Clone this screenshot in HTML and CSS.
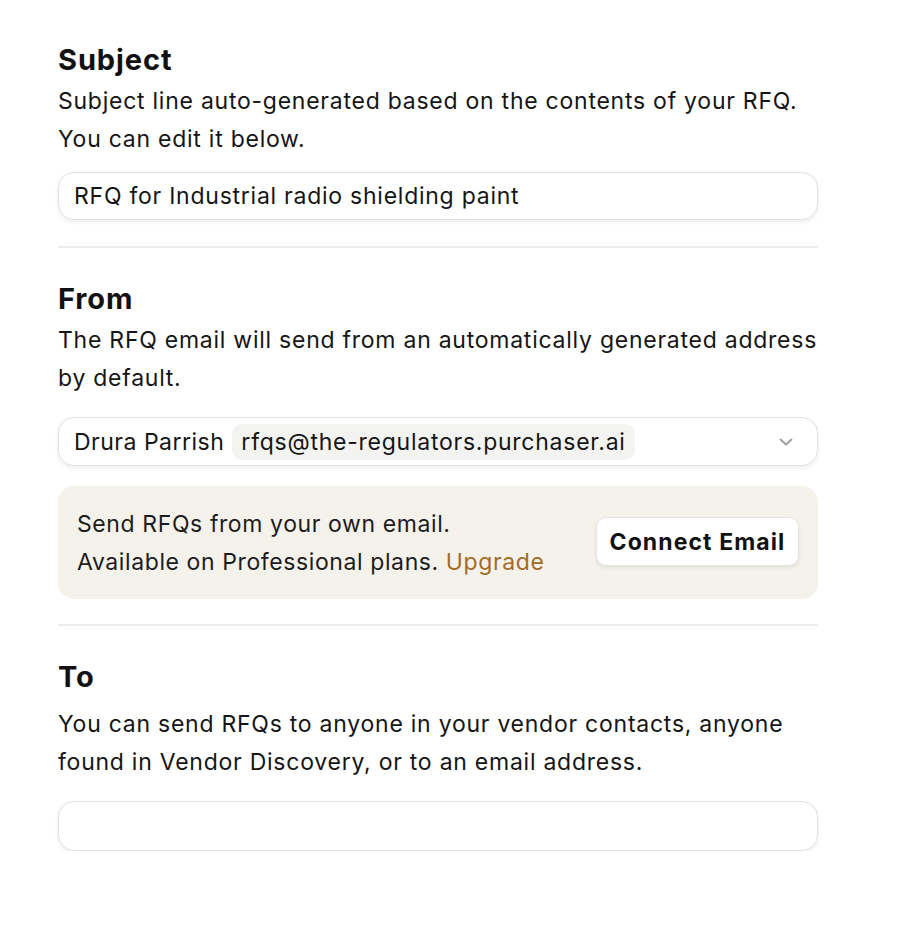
FILE: index.html
```html
<!DOCTYPE html>
<html>
<head>
<meta charset="utf-8">
<link rel="stylesheet" href="styles.css">
</head>
<body>
<main class="form">
  <section class="section">
    <h2 class="title">Subject</h2>
    <p class="desc">Subject line auto-generated based on the contents of your RFQ. You can edit it below.</p>
    <div class="field field-subject">RFQ for Industrial radio shielding paint</div>
  </section>
  <hr class="divider">
  <section class="section">
    <h2 class="title">From</h2>
    <p class="desc">The RFQ email will send from an automatically generated address by default.</p>
    <div class="field select">
      <span class="name">Drura Parrish</span>
      <span class="chip">rfqs@the-regulators.purchaser.ai</span>
      <svg class="chev" width="18" height="18" viewBox="0 0 18 18"><path d="M3.5 6.5 L9 11.5 L14.5 6.5" fill="none" stroke="#9c9c9c" stroke-width="1.8" stroke-linecap="round" stroke-linejoin="round"/></svg>
    </div>
    <div class="banner">
      <div class="banner-text">
        <div>Send RFQs from your own email.</div>
        <div>Available on Professional plans. <span class="upgrade">Upgrade</span></div>
      </div>
      <button class="btn">Connect Email</button>
    </div>
  </section>
  <hr class="divider divider-after-banner">
  <section class="section">
    <h2 class="title">To</h2>
    <p class="desc desc-to">You can send RFQs to anyone in your vendor contacts, anyone found in Vendor Discovery, or to an email address.</p>
    <div class="field empty"></div>
  </section>
</main>
</body>
</html>
```
FILE: styles.css
```css
* { box-sizing: border-box; }
body {
  margin: 0;
  background: #fff;
  font-family: Inter, "Noto Sans", sans-serif;
  color: #111;
}
.form {
  width: 760px;
  margin-left: 58px;
  padding-top: 40px;
}
.title {
  margin: 0;
  font-size: 29px;
  font-weight: 700;
  line-height: 40px;
  letter-spacing: 0.9px;
}
.desc {
  margin: 2px 0 0;
  font-size: 23px;
  line-height: 38px;
  letter-spacing: 0.75px;
  color: #151515;
}
.desc-to { margin-top: 8px; }
.field {
  margin-top: 20px;
  height: 49px;
  border: 1px solid #e0e0e0;
  border-radius: 16px;
  box-shadow: 0 2px 5px rgba(0,0,0,0.07);
  display: flex;
  align-items: center;
  padding: 0 15px;
  font-size: 23px;
  letter-spacing: 0.75px;
  color: #151515;
}
.field-subject { margin-top: 14px; height: 48px; }
.select { gap: 8px; }
.name { letter-spacing: 0.5px; }
.chip {
  background: #f3f3f1;
  border-radius: 10px;
  padding: 0 9px;
  height: 36px;
  display: flex;
  align-items: center;
}
.chev { margin-left: auto; margin-right: 7px; }
.divider {
  border: 0;
  border-top: 2px solid #ececec;
  margin: 26px 0 31px;
}
.divider-after-banner { margin-top: 25px; }
.banner {
  margin-top: 20px;
  height: 113px;
  background: #f5f2ec;
  border-radius: 16px;
  padding: 0 19px;
  display: flex;
  align-items: center;
  justify-content: space-between;
  font-size: 23px;
  line-height: 38px;
  letter-spacing: 0.6px;
  color: #1c1c1c;
}
.upgrade { color: #a36b25; }
.btn {
  font-family: inherit;
  font-size: 23px;
  font-weight: 700;
  letter-spacing: 1.1px;
  color: #111;
  background: #fff;
  border: 1px solid #e4e4e4;
  border-radius: 10px;
  box-shadow: 0 2px 4px rgba(0,0,0,0.07);
  padding: 0 11px;
  height: 49px;
  width: 203px;
  margin-top: -2px;
}
.empty { height: 50px; }
```
